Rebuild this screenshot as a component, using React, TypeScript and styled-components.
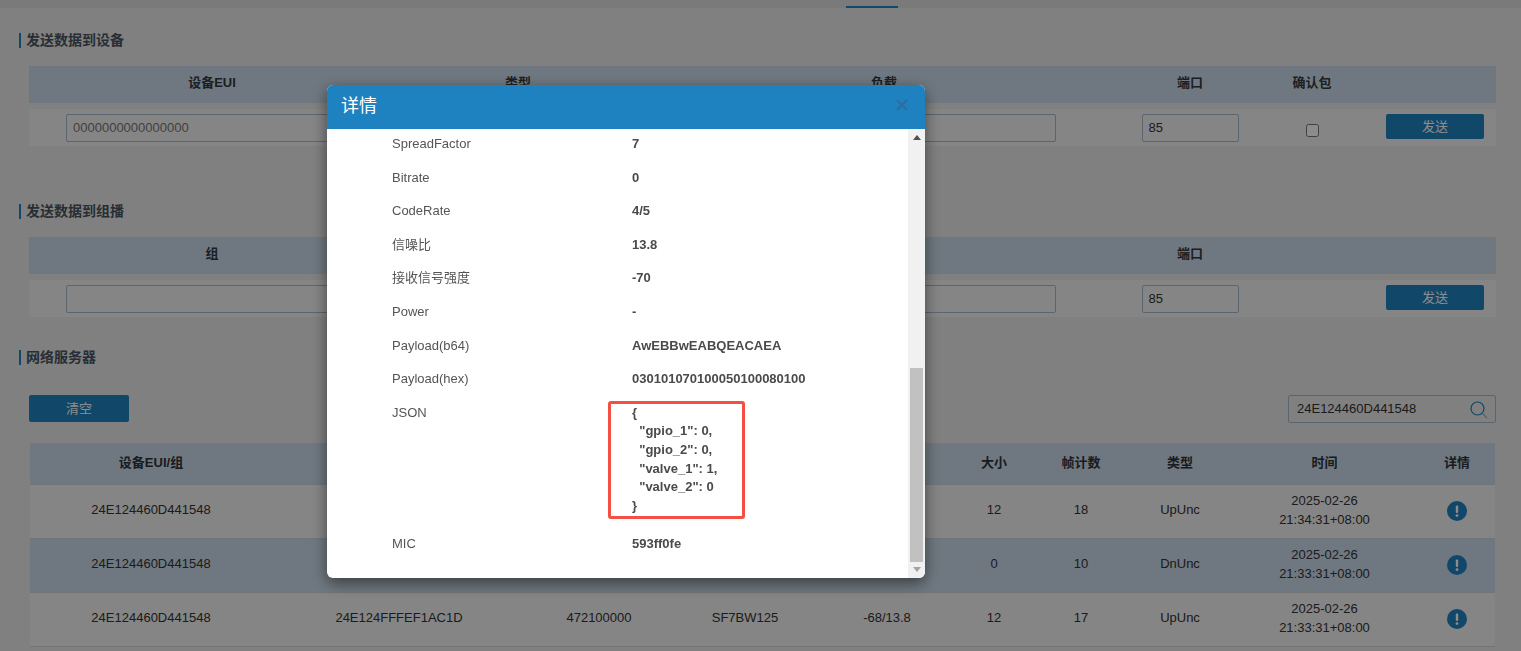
import React from "react";
import styled, { createGlobalStyle } from "styled-components";

const FONT = `"Liberation Sans", "Noto Sans CJK SC", sans-serif`;

const Global = createGlobalStyle`
  html, body { margin: 0; padding: 0; height: 100%; overflow: hidden; background: #e9e9e9; }
  body { font: 13px/1.42857 ${FONT}; color: #333; }
  * { box-sizing: border-box; }
`;

const Page = styled.div`
  height: 651px;
  overflow: hidden;
  background: #e9e9e9;
`;
const TopBar = styled.div`
  height: 8px;
  background: #dedede;
  display: flex;
  align-items: flex-end;
  padding-left: 846px;
`;
const TabLine = styled.div`
  width: 52px;
  height: 2px;
  background: #1f82c0;
`;
const Content = styled.main`
  padding: 0 25px 0 29px;
`;
const SectionTitle = styled.h3<{ $top: number }>`
  margin: ${(p) => p.$top}px 0 18px -10px;
  height: 15px;
  border-left: 2px solid #1f82c0;
  padding-left: 5px;
  font-size: 14px;
  line-height: 15px;
  font-weight: 700;
  color: #4a5560;
`;
const GridRow = styled.div<{ $cols: string }>`
  display: grid;
  grid-template-columns: ${(p) => p.$cols};
  align-items: center;
`;
const FormHead = styled(GridRow)`
  height: 37px;
  background: #cadae9;
  margin-bottom: 6px;
  padding-bottom: 3px;
  font-weight: 700;
  color: #33383d;
  text-align: center;
`;
const FormBody = styled(GridRow)`
  height: 37px;
  background: #f2f2f2;
`;
const Cell = styled.div`
  display: flex;
  justify-content: center;
  align-items: center;
  min-width: 0;
`;
const TextInput = styled.input<{ $w: number }>`
  width: ${(p) => p.$w}px;
  height: 28px;
  padding: 0 6px;
  border: 1px solid #a7b8cc;
  border-radius: 2px;
  background: transparent;
  font: 13px ${FONT};
  color: #333;
  &::placeholder { color: #777; opacity: 1; }
`;
const Check = styled.span`
  width: 13px;
  height: 13px;
  margin-top: 6px;
  border: 1px solid #767676;
  border-radius: 2.5px;
  background: #fff;
`;
const Primary = styled.button<{ $w: number; $shift?: number }>`
  width: ${(p) => p.$w}px;
  height: 25px;
  margin-left: ${(p) => p.$shift ?? 0}px;
  border: 0;
  border-radius: 2px;
  padding: 0;
  background: #1f82c0;
  color: #fff;
  font: 13px/25px ${FONT};
`;
const FormButton = styled(Primary)`
  margin-top: -2px;
`;
const Toolbar = styled.div`
  height: 28px;
  margin: 30px 0 20px;
  display: flex;
  justify-content: space-between;
  align-items: flex-start;
`;
const ToolButton = styled(Primary)`
  height: 27px;
  line-height: 24px;
`;
const Search = styled.div`
  width: 208px;
  height: 28px;
  border: 1px solid #a7b8cc;
  border-radius: 2px;
  display: flex;
  align-items: center;
  justify-content: space-between;
  padding: 0 7px 0 8px;
  svg { display: block; margin-top: 2px; }
`;
const DataTable = styled.div`
  margin: 0 1px;
`;
const DataHead = styled(GridRow)`
  height: 41px;
  background: #cadae9;
  font-weight: 700;
  color: #2f3338;
  text-align: center;
`;
const DataRow = styled(GridRow)<{ $selected?: boolean }>`
  height: 54px;
  padding-bottom: 2px;
  background: ${(p) => (p.$selected ? "#cadae9" : "#f2f2f2")};
  border-top: 1px solid #cfd3d7;
  text-align: center;
  color: #333;
`;
const LastRule = styled.div`
  border-top: 1px solid #cfd3d7;
`;
const Backdrop = styled.div`
  position: fixed;
  inset: 0;
  background: rgba(0, 0, 0, 0.45);
`;
const Modal = styled.section`
  position: absolute;
  left: 327px;
  top: 85px;
  width: 598px;
  height: 493px;
  display: flex;
  flex-direction: column;
  background: #fff;
  border-radius: 6px;
  overflow: hidden;
  box-shadow: 0 5px 15px rgba(0, 0, 0, 0.5);
`;
const ModalHead = styled.header`
  flex: 0 0 44px;
  height: 44px;
  background: #1f82c0;
  color: #fff;
  display: flex;
  align-items: center;
  justify-content: space-between;
  padding: 0 17px 3px 14px;
  font-size: 18px;
  line-height: 24px;
  svg { margin-top: -2px; }
`;
const ModalBody = styled.div`
  flex: 1;
  display: flex;
  min-height: 0;
`;
const Details = styled.div`
  position: relative;
  flex: 1;
  display: flex;
  flex-direction: column;
  justify-content: flex-end;
  overflow: hidden;
  padding: 0 0 14px 65px;
`;
const DetailRow = styled.div<{ $tall?: boolean }>`
  display: grid;
  grid-template-columns: 240px 1fr;
  padding: 5px 0 ${(p) => (p.$tall ? 15 : 10)}px;
  min-height: 33.6px;
  line-height: 18.6px;
`;
const Label = styled.div`
  color: #555;
  font-size: 13px;
`;
const Value = styled.div`
  color: #4a4a4a;
  font-size: 13px;
  font-weight: 700;
  white-space: pre;
`;
const Highlight = styled.div`
  position: absolute;
  left: 281px;
  top: 272px;
  width: 137px;
  height: 118px;
  border: 3px solid #f44f45;
  border-radius: 3px;
`;
const Scrollbar = styled.div`
  flex: 0 0 17px;
  display: flex;
  flex-direction: column;
  background: #f1f1f1;
`;
const ScrollArrow = styled.div`
  flex: 0 0 17px;
  display: flex;
  align-items: center;
  justify-content: center;
`;
const ScrollTrack = styled.div`
  flex: 1;
  display: flex;
  flex-direction: column;
  justify-content: flex-end;
`;
const ScrollThumb = styled.div`
  height: 194px;
  margin: 0 2px -1px;
  background: #c1c1c1;
`;

const FORM_COLS = "366px 246px 486px 126px 118px 125px";
const TABLE_COLS = "242px 254px 146px 146px 138px 76px 98px 100px 189px 76px";

const Info = () => (
  <svg width="20" height="20" viewBox="0 0 20 20" aria-hidden>
    <circle cx="10" cy="10" r="10" fill="#1f82c0" />
    <rect x="8.8" y="4.5" width="2.4" height="7.5" rx="1" fill="#fff" />
    <circle cx="10" cy="14.6" r="1.4" fill="#fff" />
  </svg>
);

const rows = [
  { size: "12", count: "18", type: "UpUnc", time: "21:34:31+08:00" },
  { size: "0", count: "10", type: "DnUnc", time: "21:33:31+08:00", selected: true },
  { size: "12", count: "17", type: "UpUnc", time: "21:33:31+08:00" },
];

const details: [string, string][] = [
  ["SpreadFactor", "7"],
  ["Bitrate", "0"],
  ["CodeRate", "4/5"],
  ["信噪比", "13.8"],
  ["接收信号强度", "-70"],
  ["Power", "-"],
  ["Payload(b64)", "AwEBBwEABQEACAEA"],
  ["Payload(hex)", "030101070100050100080100"],
  ["JSON", '{\n  "gpio_1": 0,\n  "gpio_2": 0,\n  "valve_1": 1,\n  "valve_2": 0\n}'],
  ["MIC", "593ff0fe"],
];

export default function App() {
  return (
    <>
      <Global />
      <Page>
        <TopBar>
          <TabLine />
        </TopBar>
        <Content>
          <SectionTitle $top={25}>发送数据到设备</SectionTitle>
          <FormHead $cols={FORM_COLS}>
            <Cell>设备EUI</Cell>
            <Cell>类型</Cell>
            <Cell>负载</Cell>
            <Cell>端口</Cell>
            <Cell>确认包</Cell>
            <Cell />
          </FormHead>
          <FormBody $cols={FORM_COLS}>
            <Cell>
              <TextInput $w={292} placeholder="0000000000000000" />
            </Cell>
            <Cell />
            <Cell>
              <TextInput $w={344} />
            </Cell>
            <Cell>
              <TextInput $w={97} defaultValue="85" />
            </Cell>
            <Cell>
              <Check />
            </Cell>
            <Cell>
              <FormButton $w={98} $shift={3}>发送</FormButton>
            </Cell>
          </FormBody>

          <SectionTitle $top={58}>发送数据到组播</SectionTitle>
          <FormHead $cols={FORM_COLS}>
            <Cell>组</Cell>
            <Cell />
            <Cell />
            <Cell>端口</Cell>
            <Cell />
            <Cell />
          </FormHead>
          <FormBody $cols={FORM_COLS}>
            <Cell>
              <TextInput $w={292} />
            </Cell>
            <Cell />
            <Cell>
              <TextInput $w={344} />
            </Cell>
            <Cell>
              <TextInput $w={97} defaultValue="85" />
            </Cell>
            <Cell />
            <Cell>
              <FormButton $w={98} $shift={3}>发送</FormButton>
            </Cell>
          </FormBody>

          <SectionTitle $top={33}>网络服务器</SectionTitle>
          <Toolbar>
            <ToolButton $w={100}>清空</ToolButton>
            <Search>
              <span>24E124460D441548</span>
              <svg width="18" height="18" viewBox="0 0 18 18" fill="none" aria-hidden>
                <circle cx="7.5" cy="7.5" r="6.5" stroke="#1f82c0" strokeWidth="1.2" />
                <path d="M12.3 12.3l4.7 4.7" stroke="#8fb4cc" strokeWidth="1.2" />
              </svg>
            </Search>
          </Toolbar>
          <DataTable>
            <DataHead $cols={TABLE_COLS}>
              <Cell>设备EUI/组</Cell>
              <Cell>网关EUI</Cell>
              <Cell>频率</Cell>
              <Cell>数据速率</Cell>
              <Cell>信号</Cell>
              <Cell>大小</Cell>
              <Cell>帧计数</Cell>
              <Cell>类型</Cell>
              <Cell>时间</Cell>
              <Cell>详情</Cell>
            </DataHead>
            {rows.map((r, i) => (
              <DataRow key={i} $cols={TABLE_COLS} $selected={r.selected}>
                <Cell>24E124460D441548</Cell>
                <Cell>24E124FFFEF1AC1D</Cell>
                <Cell>472100000</Cell>
                <Cell>SF7BW125</Cell>
                <Cell>-68/13.8</Cell>
                <Cell>{r.size}</Cell>
                <Cell>{r.count}</Cell>
                <Cell>{r.type}</Cell>
                <Cell>
                  2025-02-26
                  <br />
                  {r.time}
                </Cell>
                <Cell>
                  <Info />
                </Cell>
              </DataRow>
            ))}
            <LastRule />
          </DataTable>
        </Content>
      </Page>
      <Backdrop>
        <Modal>
          <ModalHead>
            <span>详情</span>
            <svg width="12" height="12" viewBox="0 0 12 12" aria-hidden>
              <path d="M1 1l10 10M11 1L1 11" stroke="#2a6ea3" strokeWidth="2.4" />
            </svg>
          </ModalHead>
          <ModalBody>
            <Details>
              {details.map(([k, v]) => (
                <DetailRow key={k} $tall={k === "JSON"}>
                  <Label>{k}</Label>
                  <Value>{v}</Value>
                </DetailRow>
              ))}
              <Highlight />
            </Details>
            <Scrollbar>
              <ScrollArrow>
                <svg width="8" height="5" viewBox="0 0 8 5" aria-hidden>
                  <path d="M4 0l4 5H0z" fill="#505050" />
                </svg>
              </ScrollArrow>
              <ScrollTrack>
                <ScrollThumb />
              </ScrollTrack>
              <ScrollArrow>
                <svg width="8" height="5" viewBox="0 0 8 5" aria-hidden>
                  <path d="M4 5L0 0h8z" fill="#a3a3a3" />
                </svg>
              </ScrollArrow>
            </Scrollbar>
          </ModalBody>
        </Modal>
      </Backdrop>
    </>
  );
}
